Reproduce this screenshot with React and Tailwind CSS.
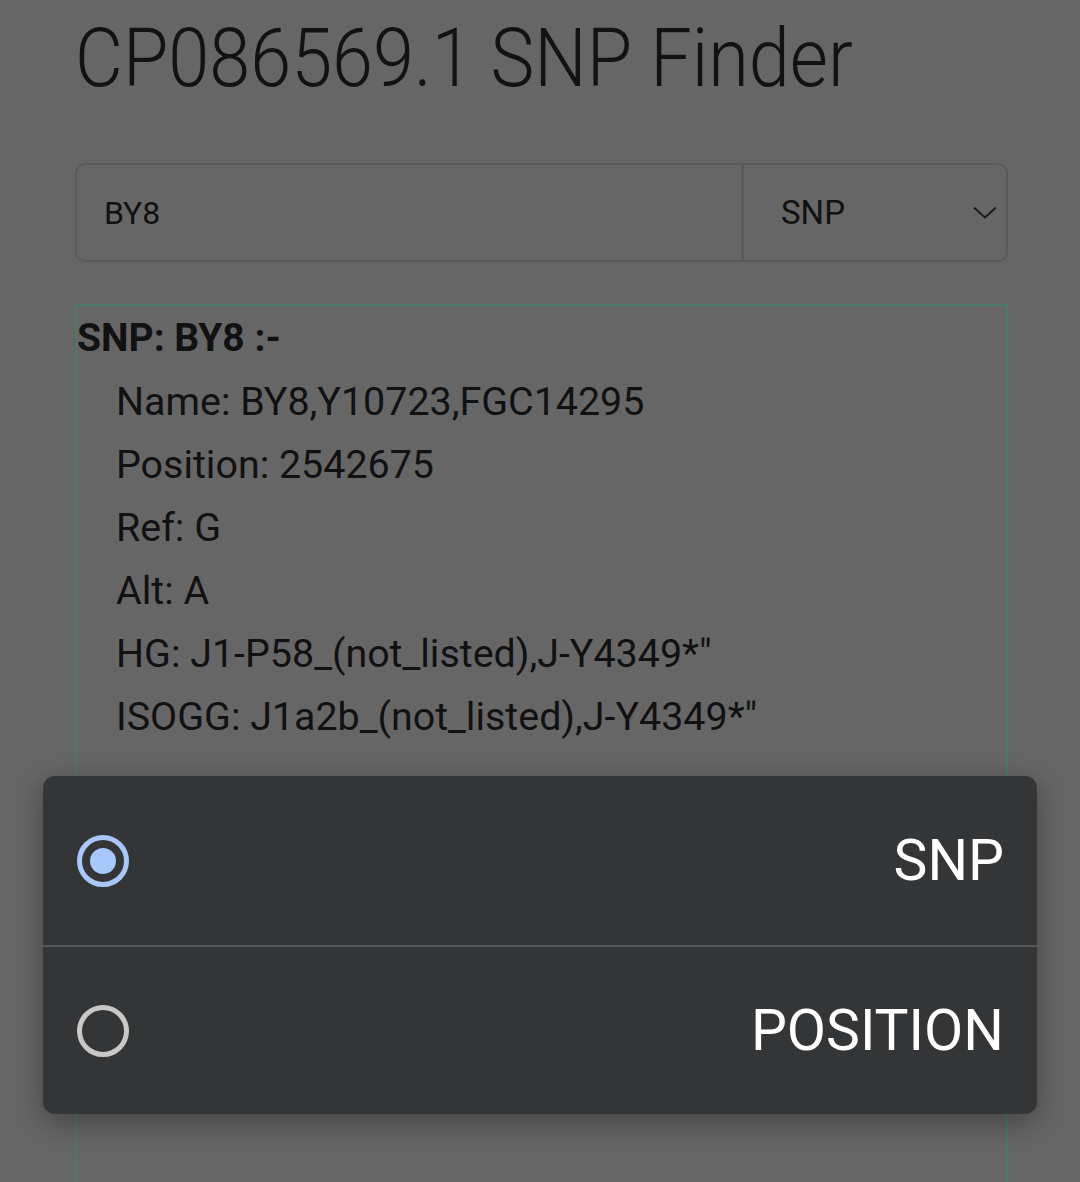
import { useState } from "react";

// ─── Result rows ──────────────────────────────────────────────────────────────

const RESULT = [
  ["Name", "BY8,Y10723,FGC14295"],
  ["Position", "2542675"],
  ["Ref", "G"],
  ["Alt", "A"],
  ["HG", "J1-P58_(not_listed),J-Y4349*\""],
  ["ISOGG", "J1a2b_(not_listed),J-Y4349*\""],
];

const OPTIONS = ["SNP", "POSITION"];

// ─── Radio dot ────────────────────────────────────────────────────────────────

function Radio({ checked }) {
  return checked ? (
    <span className="flex h-[52px] w-[52px] items-center justify-center rounded-full border-[5px] border-[#a8c7fa]">
      <span className="h-[26px] w-[26px] rounded-full bg-[#a8c7fa]" />
    </span>
  ) : (
    <span className="h-[52px] w-[52px] rounded-full border-[5px] border-[#c8c8c8]" />
  );
}

// ─── Page ─────────────────────────────────────────────────────────────────────

export default function App() {
  const [mode, setMode] = useState("SNP");

  return (
    <div className="relative h-[1182px] w-full overflow-hidden bg-[#666666] font-['Roboto',sans-serif] text-[#111111]">

      {/* ── Page body ── */}
      <div className="pl-[75px] pr-[72px] pt-[17px]">
        <h1 className="origin-left scale-x-[0.9] whitespace-nowrap text-[82px] font-light leading-none text-[#121212]">
          CP086569.1 SNP Finder
        </h1>

        {/* ── Search bar ── */}
        <div className="mt-[64px] flex h-[99px] rounded-[10px] border-2 border-[#5a5a5a]">
          <div className="flex flex-1 items-center pl-[27px] text-[32px]">BY8</div>
          <div className="flex w-[265px] items-center justify-between border-l-[3px] border-[#5a5a5a] pl-[37px] pr-[9px] text-[33px]">
            <span>{mode}</span>
            <svg width="24" height="13" viewBox="0 0 24 13" fill="none" stroke="#1a1a1a" strokeWidth="2">
              <path d="M1 1.5l11 10 11-10" />
            </svg>
          </div>
        </div>

        {/* ── Result box ── */}
        <div className="mt-[42px] h-[900px] border-2 border-[#4a7a68]">
          <p className="pt-[9px] text-[39px] font-bold leading-[46px]">SNP: BY8 :-</p>
          <div className="pl-[39px] pt-[9px]">
            {RESULT.map(([k, v]) => (
              <p key={k} className="text-[39.4px] leading-[63px]">
                {k}: {v}
              </p>
            ))}
          </div>
        </div>
      </div>

      {/* ── Option dialog ── */}
      <div className="absolute left-[43px] top-[776px] w-[994px] overflow-hidden rounded-[12px] bg-[#343537] shadow-[0_8px_30px_rgba(0,0,0,0.35)]">
        {OPTIONS.map((opt, i) => (
          <button
            key={opt}
            type="button"
            onClick={() => setMode(opt)}
            className={`flex h-[169px] w-full items-center justify-between pl-[34px] pr-[33px] text-white ${
              i > 0 ? "border-t-2 border-[#555658]" : ""
            }`}
          >
            <Radio checked={mode === opt} />
            <span className="text-[57px] leading-none">{opt}</span>
          </button>
        ))}
      </div>
    </div>
  );
}
